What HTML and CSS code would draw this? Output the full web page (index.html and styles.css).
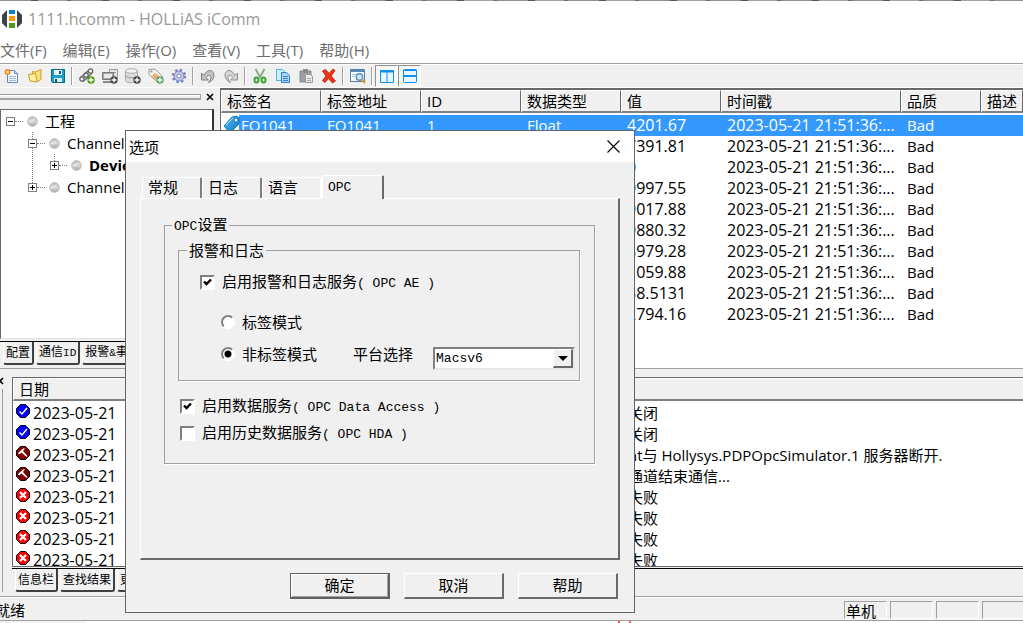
FILE: index.html
```html
<!DOCTYPE html>
<html lang="zh-CN">
<head>
    <meta charset="UTF-8">
    <meta name="viewport" content="width=device-width, initial-scale=1.0">
    <title>1111.hcomm - HOLLiAS iComm</title>
    <link rel="stylesheet" href="styles.css">
</head>
<body>
    <!-- 公用图标 -->
    <svg class="defs" width="0" height="0">
        <defs>
            <linearGradient id="tagFill" x1="0" y1="0" x2="1" y2="1">
                <stop offset="0" stop-color="#5cc4f8"/>
                <stop offset="1" stop-color="#0870c0"/>
            </linearGradient>
            <linearGradient id="ballFill" x1="0" y1="0" x2="0" y2="1">
                <stop offset="0" stop-color="#c0c0c0"/>
                <stop offset="0.5" stop-color="#d8d8d8"/>
                <stop offset="1" stop-color="#a8a8a8"/>
            </linearGradient>
            <symbol id="ball" viewBox="0 0 11 11">
                <circle cx="5.5" cy="5.5" r="4.8" fill="url(#ballFill)" stroke="#b8b8b8"/>
                <path d="M2 5.500 Q5 6 7.500 3" stroke="#f4f4f4" fill="none"/>
            </symbol>
            <symbol id="ok" viewBox="0 0 14 14">
                <path d="M4.5.5h5l4 4v5l-4 4h-5l-4-4v-5z" fill="#0000ff" stroke="#000"/>
                <path d="M3.5 7.5l2.5 2.5 5-6" stroke="#fff" stroke-width="1.5" fill="none"/>
            </symbol>
            <symbol id="hammer" viewBox="0 0 14 14">
                <path d="M4.5.5h5l4 4v5l-4 4h-5l-4-4v-5z" fill="#800000" stroke="#000"/>
                <path d="M2 8l1-2 4-3.500h2l-2 2.500 4.500 5-1 1-5-4.500-1.500 1.500z" fill="#fff"/>
            </symbol>
            <symbol id="fail" viewBox="0 0 14 14">
                <path d="M4.5.5h5l4 4v5l-4 4h-5l-4-4v-5z" fill="#ff0000" stroke="#000"/>
                <path d="M4 4l6 6M10 4l-6 6" stroke="#fff" stroke-width="2.2"/>
            </symbol>
            <symbol id="plus" viewBox="0 0 8 8">
                <circle cx="4" cy="4" r="3.7"/>
                <path d="M4 1.5v5M1.5 4h5" stroke="#fff" stroke-width="1.3"/>
            </symbol>
        </defs>
    </svg>

    <div class="app">
        <div class="backdrop-top"></div>

        <header class="titlebar">
            <svg width="20" height="20" viewBox="0 0 20 20">
                <path d="M0 6l5-5v18l-5-5zM20 6l-5-5v18l5-5z" fill="#3c4248"/>
                <path d="M7 1h6v4h-6z" fill="#0a7fd8"/>
                <path d="M7 7h6v5h-6z" fill="#ff9800"/>
                <path d="M7 14h6v5h-6z" fill="#4c9a1c"/>
            </svg>
            <span>1111.hcomm - HOLLiAS iComm</span>
        </header>

        <nav class="menubar">
            <a href="#">文件(F)</a>
            <a href="#">编辑(E)</a>
            <a href="#">操作(O)</a>
            <a href="#">查看(V)</a>
            <a href="#">工具(T)</a>
            <a href="#">帮助(H)</a>
        </nav>

        <div class="toolbar">
            <button class="tool" aria-label="新建">
                <svg viewBox="0 0 16 16"><path d="M3.500 2.500h7l3 3v9h-10z" fill="#f4f8ff" stroke="#6c84b8"/><path d="M10.500 2.500v3h3" fill="#c8d8f0" stroke="#6c84b8"/><path d="M5 8.500h7M5 10.500h7M5 12.500h7" stroke="#a0b8e0"/><circle cx="3.500" cy="4" r="3" fill="#f5882c"/><circle cx="3.500" cy="4" r="1.500" fill="#ffe080"/></svg>
            </button>
            <button class="tool" aria-label="打开">
                <svg viewBox="0 0 16 16"><path d="M5.500 6v-2.500l3 .5 5.500-2.500v10l-4 2" fill="#f8e080" stroke="#c8a020"/><path d="M1.500 6.500l7-1 1.500 8.500-7-1z" fill="#fff0a0" stroke="#c8a020"/></svg>
            </button>
            <button class="tool" aria-label="保存">
                <svg viewBox="0 0 16 16"><path d="M1.500 1.500h13v13h-12l-1-1z" fill="#18a0c4" stroke="#0c6484"/><path d="M4 2h8v5h-8z" fill="#e8f8ff"/><path d="M4 10h8v4h-8z" fill="#d4f0f8"/><path d="M9 3h2v3h-2z" fill="#185068"/><path d="M5 11h2v3h-2z" fill="#185068"/></svg>
            </button>
            <span class="sep"></span>
            <button class="tool" aria-label="添加通道">
                <svg viewBox="0 0 16 16"><g fill="none" stroke="#686868" stroke-width="1.300"><circle cx="11.500" cy="3" r="2.200"/><circle cx="7" cy="7" r="2.200"/><circle cx="3" cy="11" r="2.200"/><path d="M9.500 2.500l-4 3.500M13 5l-4 4M5 6.500l-4 3.500M9 9l-5 4.500"/></g><use href="#plus" x="8" y="8" width="8" height="8" fill="#489c10"/></svg>
            </button>
            <button class="tool" aria-label="添加设备">
                <svg viewBox="0 0 16 16"><path d="M7.500 1.500h8v9h-8z" fill="#e4e4e4" stroke="#999"/><path d="M9 4.500h5" stroke="#999"/><path d="M.5 4.500h11v7h-11z" fill="#aaa" stroke="#777"/><path d="M2 6h8v4h-8z" fill="#e8e8e8"/><path d="M1 14h9" stroke="#888" stroke-width="2"/><use href="#plus" x="8" y="8" width="8" height="8" fill="#444"/></svg>
            </button>
            <button class="tool" aria-label="添加数据">
                <svg viewBox="0 0 16 16"><path d="M.5 3v9.500c0 3 12 3 12 0v-9.500" fill="#dcdcdc" stroke="#a8a8a8"/><ellipse cx="6.500" cy="3" rx="6" ry="2.300" fill="#f4f4f4" stroke="#aaa"/><path d="M.5 7.500c0 3 12 3 12 0" fill="none" stroke="#999"/><use href="#plus" x="8" y="8" width="8" height="8" fill="#444"/></svg>
            </button>
            <button class="tool" aria-label="添加标签">
                <svg viewBox="0 0 16 16"><path d="M1 1.500l6-.5 8 8-5 5.500-9-8z" fill="#f4f4ea" stroke="#999"/><path d="M7 5l4 3-3 4-4-4z" fill="#f5a870"/><circle cx="3.500" cy="3.500" r="1" fill="#888"/><use href="#plus" x="8" y="8" width="8" height="8" fill="#58a868"/></svg>
            </button>
            <button class="tool" aria-label="设置">
                <svg viewBox="0 0 16 16"><circle cx="8" cy="8" r="6" fill="none" stroke="#7c84b8" stroke-width="2.500" stroke-dasharray="2.400 2.310"/><circle cx="8" cy="8" r="5" fill="#c0c8ec" stroke="#7c84b8"/><circle cx="8" cy="8" r="2" fill="#fff" stroke="#7c84b8"/></svg>
            </button>
            <span class="sep"></span>
            <button class="tool" aria-label="撤销">
                <svg viewBox="0 0 16 16"><path d="M1.500 5v7h7l-2.500-2.500c3-4 6-2.500 4.500 2l-2 3c7-2 7-12 1.500-12-3 0-4.500 2.500-6 5z" fill="#c4c4c4" stroke="#808080"/></svg>
            </button>
            <button class="tool" aria-label="重做">
                <svg viewBox="0 0 16 16"><path d="M14.500 5v7h-7l2.500-2.500c-3-4-6-2.500-4.500 2l2 3c-7-2-7-12-1.500-12 3 0 4.500 2.500 6 5z" fill="#d4d4d4" stroke="#909090"/></svg>
            </button>
            <span class="sep"></span>
            <button class="tool" aria-label="剪切">
                <svg viewBox="0 0 16 16"><path d="M3.500 1l5 9M12.500 1l-5 9" stroke="#88a880" stroke-width="1.800"/><g fill="none" stroke="#38a830" stroke-width="2"><ellipse cx="4.500" cy="12" rx="2" ry="2.500"/><ellipse cx="11.500" cy="12" rx="2" ry="2.500"/></g></svg>
            </button>
            <button class="tool" aria-label="复制">
                <svg viewBox="0 0 16 16"><path d="M1.500 1.500h6l2 2v9h-8z" fill="#c8f0f8" stroke="#48b8d8"/><path d="M6.500 4.500h5l3 3v7h-8z" fill="#a8d4fa" stroke="#3080c8"/><path d="M8 8.500h5M8 10.500h5M8 12.500h5" stroke="#3c84d0"/></svg>
            </button>
            <button class="tool" aria-label="粘贴">
                <svg viewBox="0 0 16 16"><path d="M2 3h11v11h-11z" fill="#a0a0a0" stroke="#888"/><path d="M5 1h5v4h-5z" fill="#888"/><path d="M7.500 6.500h5l2 2v6h-7z" fill="#e8e8e8" stroke="#999"/><path d="M9 10.500h4M9 12.500h4" stroke="#aaa"/></svg>
            </button>
            <button class="tool" aria-label="删除">
                <svg viewBox="0 0 16 16"><path d="M1.500 3l3-1.500 3.500 4 4-4.500 2 1.500-4 5.500 4.500 5-3 2-4-4.500-3.500 4-2.500-2 3.500-4.500z" fill="#f03018" stroke="#c82c14"/></svg>
            </button>
            <span class="sep"></span>
            <button class="tool" aria-label="查找">
                <svg viewBox="0 0 16 16"><path d="M.5 1.500h14v12h-14z" fill="#f4f8fc" stroke="#587ca8"/><path d="M0 3h15" stroke="#5888b8" stroke-width="2"/><path d="M2 6.500h4M2 8.500h3" stroke="#b4c8dc"/><circle cx="9.500" cy="9" r="3.200" fill="#c8e8fa" stroke="#6090c0" stroke-width="1.400"/><path d="M12 11.500l3 3.500" stroke="#e0a020" stroke-width="2"/></svg>
            </button>
            <span class="sep"></span>
            <button class="tool pressed" aria-label="左右窗口">
                <svg viewBox="0 0 16 16"><path d="M1.500 2.500h13v12h-13zM8 3v12" fill="#e8f6ff" stroke="#1090f0"/><path d="M1 3.500h14" stroke="#1090f0" stroke-width="2"/></svg>
            </button>
            <button class="tool pressed" aria-label="上下窗口">
                <svg viewBox="0 0 16 16"><rect x="1.500" y="1.500" width="13" height="13" rx="1" fill="#e8f6ff" stroke="#1090f0"/><path d="M1 8h14" stroke="#1090f0" stroke-width="2"/><path d="M1 2.500h14" stroke="#1090f0"/></svg>
            </button>
        </div>

        <div class="work">
            <aside class="project">
                <div class="grip-row">
                    <span class="grip"></span>
                    <button class="pane-close" aria-label="关闭窗格"><svg width="8" height="8" viewBox="0 0 8 8"><path d="M1 1l6 6M7 1l-6 6" stroke="#000" stroke-width="1.600"/></svg></button>
                </div>
                <ul class="tree">
                    <li>
                        <div class="node"><i class="box minus"></i><i class="dots"></i><svg width="11" height="11"><use href="#ball"/></svg><span>工程</span></div>
                        <ul>
                            <li>
                                <div class="node"><i class="box minus"></i><i class="dots"></i><svg width="11" height="11"><use href="#ball"/></svg><span>Channel1</span></div>
                                <ul>
                                    <li><div class="node"><i class="box"></i><i class="dots"></i><svg width="11" height="11"><use href="#ball"/></svg><b>Device1</b></div></li>
                                </ul>
                            </li>
                            <li><div class="node"><i class="box"></i><i class="dots"></i><svg width="11" height="11"><use href="#ball"/></svg><span>Channel2</span></div></li>
                        </ul>
                    </li>
                </ul>
                <div class="tabs">
                    <button class="tab active">配置</button>
                    <button class="tab">通信<span class="lat">ID</span></button>
                    <button class="tab">报警<span class="lat">&amp;</span>事件</button>
                </div>
            </aside>

            <main class="tags">
                <table>
                    <colgroup>
                        <col class="c100"><col class="c100"><col class="c100"><col class="c100"><col class="c100"><col class="c180"><col class="c80"><col>
                    </colgroup>
                    <thead>
                        <tr><th>标签名</th><th>标签地址</th><th>ID</th><th>数据类型</th><th>值</th><th>时间戳</th><th>品质</th><th>描述</th></tr>
                    </thead>
                    <tbody>
                        <tr class="selected">
                            <td class="name"><svg width="18" height="18" viewBox="0 0 18 18"><path d="M1 11l8-9 5-1 3 3-1 5-8 8-2 0z" fill="url(#tagFill)" stroke="#1880c8"/><path d="M3 10l7-7" stroke="#a8e0fc"/><circle cx="13" cy="5" r="2" fill="#fff" stroke="#1068b0"/></svg>FQ1041</td>
                            <td>FQ1041</td><td>1</td><td>Float</td><td class="num">4201.67</td><td class="num">2023-05-21 21:51:36:...</td><td>Bad</td><td></td>
                        </tr>
                        <tr><td></td><td></td><td></td><td></td><td class="num">7391.81</td><td class="num">2023-05-21 21:51:36:...</td><td>Bad</td><td></td></tr>
                        <tr><td></td><td></td><td></td><td></td><td class="num">0</td><td class="num">2023-05-21 21:51:36:...</td><td>Bad</td><td></td></tr>
                        <tr><td></td><td></td><td></td><td></td><td class="num">9997.55</td><td class="num">2023-05-21 21:51:36:...</td><td>Bad</td><td></td></tr>
                        <tr><td></td><td></td><td></td><td></td><td class="num">9017.88</td><td class="num">2023-05-21 21:51:36:...</td><td>Bad</td><td></td></tr>
                        <tr><td></td><td></td><td></td><td></td><td class="num">9880.32</td><td class="num">2023-05-21 21:51:36:...</td><td>Bad</td><td></td></tr>
                        <tr><td></td><td></td><td></td><td></td><td class="num">8979.28</td><td class="num">2023-05-21 21:51:36:...</td><td>Bad</td><td></td></tr>
                        <tr><td></td><td></td><td></td><td></td><td class="num">1059.88</td><td class="num">2023-05-21 21:51:36:...</td><td>Bad</td><td></td></tr>
                        <tr><td></td><td></td><td></td><td></td><td class="num">38.5131</td><td class="num">2023-05-21 21:51:36:...</td><td>Bad</td><td></td></tr>
                        <tr><td></td><td></td><td></td><td></td><td class="num">2794.16</td><td class="num">2023-05-21 21:51:36:...</td><td>Bad</td><td></td></tr>
                    </tbody>
                </table>
            </main>
        </div>

        <section class="output">
            <div class="gutter"><svg width="8" height="8" viewBox="0 0 8 8"><path d="M1 1l6 6M7 1l-6 6" stroke="#000" stroke-width="1.600"/></svg></div>
            <div class="output-main">
                <div class="log">
                    <table>
                        <colgroup><col class="c-date"><col></colgroup>
                        <thead><tr><th>日期</th><th></th></tr></thead>
                        <tbody>
                            <tr><td class="date"><svg width="14" height="14"><use href="#ok"/></svg>2023-05-21</td><td>关闭</td></tr>
                            <tr><td class="date"><svg width="14" height="14"><use href="#ok"/></svg>2023-05-21</td><td>关闭</td></tr>
                            <tr><td class="date"><svg width="14" height="14"><use href="#hammer"/></svg>2023-05-21</td><td>nt与 Hollysys.PDPOpcSimulator.1 服务器断开.</td></tr>
                            <tr><td class="date"><svg width="14" height="14"><use href="#hammer"/></svg>2023-05-21</td><td>通道结束通信...</td></tr>
                            <tr><td class="date"><svg width="14" height="14"><use href="#fail"/></svg>2023-05-21</td><td>失败</td></tr>
                            <tr><td class="date"><svg width="14" height="14"><use href="#fail"/></svg>2023-05-21</td><td>失败</td></tr>
                            <tr><td class="date"><svg width="14" height="14"><use href="#fail"/></svg>2023-05-21</td><td>失败</td></tr>
                            <tr><td class="date"><svg width="14" height="14"><use href="#fail"/></svg>2023-05-21</td><td>失败</td></tr>
                        </tbody>
                    </table>
                </div>
                <div class="tabs">
                    <button class="tab active">信息栏</button>
                    <button class="tab">查找结果</button>
                    <button class="tab">更多</button>
                </div>
            </div>
        </section>

        <footer class="statusbar">
            <span class="ready">就绪</span>
            <span class="cell">单机</span>
            <span class="cell"></span>
            <span class="cell"></span>
            <span class="cell"></span>
        </footer>
        <div class="backdrop-bottom"></div>
    </div>

    <!-- 选项对话框 -->
    <div class="dialog" role="dialog" aria-labelledby="dialogTitle">
        <div class="dialog-title">
            <span id="dialogTitle">选项</span>
            <button class="close" aria-label="关闭"><svg width="13" height="13" viewBox="0 0 13 13"><path d="M.5.5l12 12M12.500.5l-12 12" stroke="#000" stroke-width="1.100"/></svg></button>
        </div>
        <form class="dialog-body" onsubmit="return false">
            <div class="sheet-tabs">
                <button type="button" class="sheet-tab">常规</button>
                <button type="button" class="sheet-tab">日志</button>
                <button type="button" class="sheet-tab">语言</button>
                <button type="button" class="sheet-tab current"><span class="mono">OPC</span></button>
            </div>
            <div class="sheet">
                <fieldset class="group">
                    <legend><span class="mono">OPC</span>设置</legend>
                    <fieldset class="group inner">
                        <legend>报警和日志</legend>
                        <div class="field service">
                            <input type="checkbox" id="opcAe" checked>
                            <label for="opcAe">启用报警和日志服务<span class="mono">( OPC AE )</span></label>
                        </div>
                        <div class="field mode">
                            <input type="radio" name="mode" id="tagMode">
                            <label for="tagMode">标签模式</label>
                        </div>
                        <div class="field mode">
                            <input type="radio" name="mode" id="noTagMode" checked>
                            <label for="noTagMode">非标签模式</label>
                            <label for="platform" class="platform-label">平台选择</label>
                            <div class="combo">
                                <select id="platform"><option>Macsv6</option></select>
                                <span class="arrow"></span>
                            </div>
                        </div>
                    </fieldset>
                    <div class="field">
                        <input type="checkbox" id="opcDa" checked>
                        <label for="opcDa">启用数据服务<span class="mono">( OPC Data Access )</span></label>
                    </div>
                    <div class="field">
                        <input type="checkbox" id="opcHda">
                        <label for="opcHda">启用历史数据服务<span class="mono">( OPC HDA )</span></label>
                    </div>
                </fieldset>
            </div>
            <div class="actions">
                <button type="submit" class="btn default">确定</button>
                <button type="button" class="btn">取消</button>
                <button type="button" class="btn">帮助</button>
            </div>
        </form>
    </div>
</body>
</html>
```
FILE: styles.css
```css
* {
    box-sizing: border-box;
}

body {
    margin: 0;
    font-family: "Open Sans", "Noto Sans CJK SC", sans-serif;
    font-size: 15px;
    line-height: 20px;
    color: #000;
    background: #f0f0f0;
    overflow: hidden;
}

button, select, input {
    font: inherit;
    color: inherit;
    margin: 0;
    padding: 0;
}

ul {
    list-style: none;
    margin: 0;
    padding: 0;
}

svg {
    flex: none;
}

.defs {
    position: absolute;
}

.app {
    display: flex;
    flex-direction: column;
    height: 100vh;
}

.backdrop-top {
    height: 1px;
    background: repeating-linear-gradient(90deg, #8c8f98 0 31px, #54565e 31px 38px, #a0a2a8 38px 67px, #6a6c74 67px 71px);
}

.titlebar {
    display: flex;
    align-items: center;
    gap: 6px;
    height: 36px;
    padding-left: 2px;
    background: #fff;
    color: #999;
    font-size: 16px;
}

.menubar {
    display: flex;
    gap: 16px;
    height: 26px;
    line-height: 26px;
    background: #fff;
}

.menubar a {
    color: #6d6d6d;
    text-decoration: none;
}

/* 工具栏 */
.toolbar {
    display: flex;
    align-items: center;
    height: 25px;
    border-top: 1px solid #a0a0a0;
    border-bottom: 1px solid #fff;
    box-shadow: inset 0 1px #fff;
}

.tool {
    display: flex;
    align-items: center;
    justify-content: center;
    width: 23px;
    height: 22px;
    border: 1px solid transparent;
    background: none;
}

.tool svg {
    width: 16px;
    height: 16px;
}

.tool.pressed {
    background: #f6f6f6;
    border-color: #909090 #fff #fff #909090;
}

.sep {
    width: 6px;
    height: 18px;
    background: linear-gradient(90deg, transparent 2px, #a0a0a0 2px 3px, #fff 3px 4px, transparent 4px);
}

/* 工程窗格 */
.work {
    display: flex;
    flex: 280;
    min-height: 0;
    border-bottom: 1px solid #a0a0a0;
}

.project {
    display: flex;
    flex-direction: column;
    width: 214px;
    margin-right: 6px;
}

.grip-row {
    display: flex;
    align-items: center;
    gap: 5px;
    height: 18px;
}

.grip {
    flex: 1;
    height: 6px;
    border: 1px solid #a0a0a0;
    border-left: 0;
    background: linear-gradient(#fff 1px, #f0f0f0 1px 3px, #a0a0a0 3px);
}

.pane-close {
    display: flex;
    width: 8px;
    border: 0;
    background: none;
}

.tree {
    flex: 1;
    margin-top: 3px;
    padding-left: 5px;
    border: solid #696969;
    border-width: 1px 2px 1px 1px;
    border-bottom-color: #e3e3e3;
    border-right-color: #303030;
    background: #fff;
    overflow: hidden;
}

.tree ul {
    position: relative;
    margin-left: 22px;
}

.tree ul::before {
    content: "";
    position: absolute;
    left: 4px;
    top: 0;
    bottom: 11px;
    border-left: 1px dotted #808080;
}

.node {
    position: relative;
    display: flex;
    align-items: center;
    height: 22px;
    white-space: nowrap;
}

.node svg {
    margin: 0 7px 0 4px;
}

.box {
    width: 9px;
    height: 9px;
    border: 1px solid #808080;
    background:
        linear-gradient(#000, #000) center / 5px 1px no-repeat,
        linear-gradient(#000, #000) center / 1px 5px no-repeat,
        #fff;
}

.box.minus {
    background: linear-gradient(#000, #000) center / 5px 1px no-repeat, #fff;
}

.dots {
    width: 8px;
    border-top: 1px dotted #808080;
}

.tabs {
    display: flex;
    gap: 2px;
    border-top: 1px solid #000;
    padding-left: 3px;
    height: 24px;
    overflow: hidden;
}

.tab {
    flex: none;
    height: 23px;
    padding: 0 2px;
    border: solid #404040;
    border-width: 0 2px 2px 1px;
    border-left-color: #fff;
    border-radius: 0 0 3px 3px;
    background: #f0f0f0;
    font-size: 12px;
    line-height: 20px;
}

.lat {
    font-family: "Liberation Mono", monospace;
    font-size: 11px;
}

.project .tabs {
    margin: 2px 0 3px;
}

/* 标签列表 */
.tags {
    flex: 1;
    min-width: 0;
    border: solid #696969;
    border-width: 2px 0 0 1px;
    background: #fff;
    overflow: hidden;
}

table {
    width: 100%;
    table-layout: fixed;
    border-collapse: separate;
    border-spacing: 0;
}

.c100 {
    width: 100px;
}

.c180 {
    width: 180px;
}

.c80 {
    width: 80px;
}

th {
    height: 23px;
    padding: 0 0 0 5px;
    border: solid #fff;
    border-width: 1px 1px 2px 1px;
    border-right-color: #696969;
    border-bottom-color: #808080;
    background: #f0f0f0;
    font-weight: normal;
    text-align: left;
    line-height: 20px;
    white-space: nowrap;
}

td {
    height: 21px;
    padding: 0 0 0 6px;
    line-height: 21px;
    white-space: nowrap;
    overflow: hidden;
}

tbody::before {
    content: "";
    display: block;
    height: 2px;
}

.num, .date {
    font-size: 16px;
}

.selected td {
    background: #3399ff;
    color: #fff;
}

.selected .name {
    padding-left: 2px;
    background: linear-gradient(90deg, #fff 18px, #3399ff 18px);
}

.name svg {
    float: left;
}

/* 信息输出 */
.output {
    display: flex;
    flex: 215;
    min-height: 0;
    padding: 8px 0 4px;
    border-bottom: 1px solid #a0a0a0;
}

.gutter {
    width: 12px;
    overflow: hidden;
    background: linear-gradient(#a0a0a0, #a0a0a0) 2px 12px / 1px 100% no-repeat;
}

.gutter svg {
    display: block;
    margin-left: -4px;
}

.output-main {
    display: flex;
    flex-direction: column;
    flex: 1;
    min-width: 0;
}

.log {
    flex: 1;
    min-height: 0;
    border: solid #696969;
    border-width: 1px 0 1px 1px;
    background: #fff;
    overflow: hidden;
    margin-bottom: 1px;
}

.log th {
    border-right: 0;
}

.log th + th {
    border-left: 0;
}

.c-date {
    width: 609px;
}

.date {
    padding-left: 3px;
}

.date svg {
    float: left;
    margin: 1px 3px 0 0;
}

/* 状态栏 */
.statusbar {
    display: flex;
    gap: 3px;
    height: 24px;
    padding: 3px 0 1px;
    border-top: 1px solid #fff;
    border-bottom: 1px solid #a0a0a0;
    overflow: hidden;
}

.ready {
    flex: 1;
    margin-left: -5px;
    line-height: 18px;
}

.cell {
    width: 43px;
    padding-left: 1px;
    border: 1px solid #fff;
    border-top-color: #a0a0a0;
    border-left-color: #a0a0a0;
    line-height: 18px;
}

.cell:last-child {
    width: 41px;
    border-right: 0;
}

.backdrop-bottom {
    height: 2px;
    background: linear-gradient(90deg, #f4f4f4 85px, #fff 85px 618px, #f55 618px 620px, #fff 620px 629px, #f55 629px 631px, #fff 631px);
}

/* 选项对话框 */
.dialog {
    position: absolute;
    left: 125px;
    top: 130px;
    width: 510px;
    border: 1px solid #606468;
    background: #f0f0f0;
    font-family: "Noto Sans CJK SC", sans-serif;
}

.dialog-title {
    display: flex;
    align-items: center;
    justify-content: space-between;
    height: 31px;
    padding: 0 14px 0 3px;
    background: #fff;
}

.close {
    display: flex;
    border: 0;
    background: none;
}

.dialog-body {
    padding: 13px 14px;
}

.mono {
    font-family: "Liberation Mono", monospace;
    font-size: 13px;
}

.sheet-tabs {
    display: flex;
    align-items: flex-end;
    padding-left: 2px;
}

.sheet-tab {
    width: 60px;
    height: 21px;
    padding: 0 0 2px 5px;
    border: solid #fff;
    border-width: 1px 2px 0 1px;
    border-right-color: #808080;
    border-radius: 2px 2px 0 0;
    background: #f0f0f0;
    line-height: 16px;
    text-align: left;
}

.sheet-tab:nth-child(3) {
    border-right-color: #fff;
}

.sheet-tab.current {
    position: relative;
    width: 62px;
    height: 24px;
    margin-bottom: -1px;
    border-right-color: #696969;
}

.sheet {
    height: 362px;
    padding: 15px 23px;
    border: solid #fff;
    border-width: 1px 2px 2px 1px;
    border-right-color: #696969;
    border-bottom-color: #696969;
}

.group {
    min-width: 0;
    margin: 0;
    padding: 3px 14px 16px 13px;
    border: 1px solid #a0a0a0;
    box-shadow: 1px 1px #fff;
}

.group.inner {
    margin-bottom: 12px;
    padding: 6px 4px 10px 20px;
}

legend {
    padding: 0 2px;
    margin-left: -6px;
}

.group.inner legend {
    margin-left: -12px;
}

.field {
    display: flex;
    align-items: center;
    height: 27px;
    padding-left: 2px;
}

.field label {
    margin-left: 7px;
    white-space: nowrap;
}

.inner .field {
    height: 32px;
    padding-left: 1px;
}

.inner .service {
    margin-bottom: 8px;
}

.inner .field.mode {
    padding-left: 22px;
}

input {
    appearance: none;
    flex: none;
    width: 15px;
    height: 15px;
    border: 2px solid #fff;
    border-top-color: #808080;
    border-left-color: #808080;
    background: #fff;
}

input[type="checkbox"]:checked {
    background: #fff url("data:image/svg+xml,%3Csvg xmlns='http://www.w3.org/2000/svg' viewBox='0 0 11 11'%3E%3Cpath d='M2 4.500l2.500 2.500 4.500-4.500' fill='none' stroke='%23000' stroke-width='2.400'/%3E%3C/svg%3E") center / 11px no-repeat;
}

input[type="radio"] {
    width: 14px;
    height: 14px;
    border-radius: 50%;
}

input[type="radio"]:checked {
    background: radial-gradient(circle, #000 3px, #fff 4px);
}

.inner .platform-label {
    margin-left: 36px;
}

.combo {
    position: relative;
    align-self: flex-end;
    flex: 1;
    height: 23px;
    margin-left: 20px;
    border: 2px solid #808080;
    border-right-color: #e8e8e8;
    border-bottom-color: #e8e8e8;
    background: #fff;
}

.combo select {
    appearance: none;
    display: block;
    width: 100%;
    height: 19px;
    padding-left: 1px;
    border: 0;
    background: none;
    font-family: "Liberation Mono", monospace;
    font-size: 13px;
}

.arrow {
    position: absolute;
    right: 0;
    top: 0;
    width: 20px;
    height: 19px;
    border: solid #fff;
    border-width: 1px 2px 2px 1px;
    border-right-color: #696969;
    border-bottom-color: #696969;
    background: #f0f0f0;
    pointer-events: none;
}

.arrow::after {
    content: "";
    position: absolute;
    left: 4px;
    top: 6px;
    border: 5px solid transparent;
    border-top-color: #000;
    border-bottom: 0;
}

.actions {
    display: flex;
    justify-content: flex-end;
    gap: 14px;
    padding: 13px 2px 0 0;
}

.btn {
    width: 100px;
    height: 26px;
    padding-bottom: 2px;
    border: solid #fff;
    border-width: 1px 2px 2px 1px;
    border-right-color: #696969;
    border-bottom-color: #696969;
    background: #f0f0f0;
    line-height: 20px;
}

.btn.default {
    border-color: #606060;
    box-shadow: inset 1px 1px #fff, inset -1px -1px #a0a0a0;
}
```
